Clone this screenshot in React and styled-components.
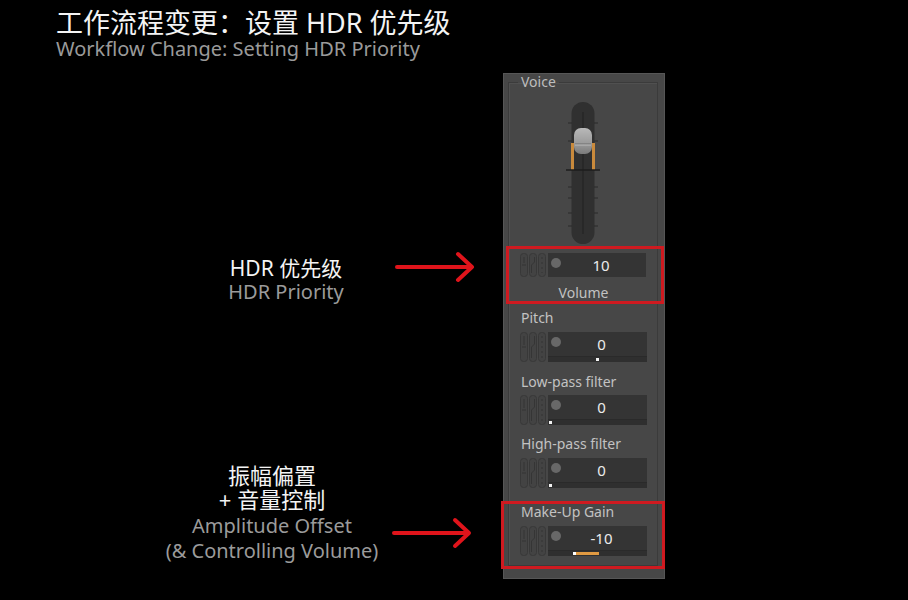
import React from 'react';
import styled, { createGlobalStyle } from 'styled-components';

const GlobalStyle = createGlobalStyle`
  body {
    margin: 0;
    background: #000;
  }
`;

const FONT = `'Noto Sans', 'Noto Sans CJK SC', sans-serif`;

const Page = styled.div`
  width: 908px;
  height: 600px;
  background: #000;
  overflow: hidden;
  font-family: ${FONT};
`;

const Header = styled.header`
  padding: 8px 0 0 56px;
`;

const Title = styled.h1`
  margin: 0;
  font-size: 27px;
  line-height: 30px;
  font-weight: 400;
  color: #f4f4f4;
`;

const Subtitle = styled.div`
  font-size: 20px;
  line-height: 22px;
  color: #9a9a9a;
`;

const Main = styled.main`
  display: flex;
  margin-top: 13px;
`;

const Notes = styled.div`
  flex: 0 0 503px;
  display: flex;
  flex-direction: column;
  padding-top: 183px;
  gap: 159px;
`;

const Note = styled.div`
  display: flex;
  align-items: flex-start;
  justify-content: flex-end;
  padding-right: ${({ $right }) => $right}px;
`;

const NoteText = styled.div`
  width: ${({ $width }) => $width}px;
  text-align: center;
`;

const NoteCn = styled.div`
  font-size: ${({ $size }) => $size || 21}px;
  line-height: 24px;
  color: #f4f4f4;
`;

const NoteEn = styled.div`
  font-size: 20px;
  line-height: ${({ $lh }) => $lh || 24}px;
  color: #9b9b9b;
  margin-top: ${({ $mt }) => $mt || 0}px;
  white-space: nowrap;
`;

const ArrowSvg = styled.svg`
  flex: 0 0 auto;
  margin-top: ${({ $top }) => $top}px;
`;

const Arrow = ({ top }) => (
  <ArrowSvg $top={top} width="80" height="32" viewBox="0 0 80 32">
    <g stroke="#e0141b" strokeWidth="4" strokeLinecap="round" strokeLinejoin="round" fill="none">
      <line x1="2" y1="16" x2="76" y2="16" />
      <polyline points="63,3 77,16 63,29" />
    </g>
  </ArrowSvg>
);

const Panel = styled.section`
  width: 162px;
  box-sizing: border-box;
  background: #474747;
  border: 1px solid #565656;
  padding: 0 6px 12px 4px;
`;

const Group = styled.fieldset`
  margin: 0;
  min-width: 0;
  border: 1px solid #3b3b3b;
  box-shadow: inset 1px 1px 0 #505050;
  padding: 10px 10px 0 10px;
`;

const Legend = styled.legend`
  margin-left: -1px;
  padding: 0 3px;
  font-size: 14px;
  line-height: 16px;
  color: #bdbdbd;
`;

const SliderWrap = styled.div`
  display: flex;
  justify-content: center;
  height: 146px;
`;

const Highlight = styled.div`
  border: 3px solid #cf1a20;
  margin: ${({ $margin }) => $margin};
  padding: ${({ $padding }) => $padding};
`;

const Label = styled.div`
  font-size: 14px;
  line-height: 16px;
  color: #c2c2c2;
  padding-left: 2px;
  margin-top: ${({ $mt }) => $mt || 0}px;
  text-align: ${({ $center }) => ($center ? 'center' : 'left')};
  white-space: nowrap;
`;

const Row = styled.div`
  display: flex;
  align-items: flex-start;
  margin-top: ${({ $mt }) => $mt || 0}px;
`;

const Knobs = styled.svg`
  flex: 0 0 auto;
  margin-right: 1px;
`;

const FieldCol = styled.div`
  width: 100px;
  display: flex;
  flex-direction: column;
`;

const Field = styled.div`
  height: 24px;
  background: #343434;
  display: flex;
  align-items: center;
  padding-left: 3px;
  color: #ececec;
  font-size: 15px;
`;

const Dot = styled.span`
  width: 10px;
  height: 10px;
  border-radius: 50%;
  background: #686868;
  flex: 0 0 auto;
  margin-top: -4px;
`;

const Value = styled.span`
  flex: 1;
  text-align: center;
  padding-right: 5px;
`;

const Track = styled.div`
  height: 6px;
  background: #2f2f2f;
  border-top: 1px solid #2a2a2a;
  box-sizing: border-box;
  display: flex;
  align-items: center;
`;

const Marker = styled.div`
  height: 3px;
  margin-left: ${({ $left }) => $left}px;
  width: ${({ $width }) => $width || 3}px;
  background: ${({ $width }) =>
    $width ? 'linear-gradient(90deg, #fff 0 3px, #e09a42 3px)' : '#f2f2f2'};
`;

const KnobColumn = ({ height }) => (
  <Knobs width="28" height={height} viewBox={`0 0 28 ${height}`}>
    <g fill="#434343" stroke="#383838" strokeWidth="1">
      <rect x="1.5" y="0.5" width="7" height={height - 1} rx="3" />
      <rect x="10.5" y="0.5" width="7" height={height - 1} rx="3" />
      <rect x="19.5" y="0.5" width="7" height={height - 1} rx="3" />
    </g>
    <g stroke="#353535" strokeWidth="1" fill="none">
      <line x1="3" y1={height / 2} x2="7" y2={height / 2} />
      <line x1="5" y1="4" x2="5" y2={height / 2 - 2} />
      <path d={`M12.5 ${height - 4} L12.5 ${height / 2} L15.5 ${height / 2 - 3} L15.5 4`} />
      <line x1="23" y1="4" x2="23" y2={height - 4} strokeDasharray="2 3" />
    </g>
  </Knobs>
);

const Control = ({ value, marker, mt, track = true }) => (
  <Row $mt={mt}>
    <KnobColumn height={track ? 30 : 24} />
    <FieldCol>
      <Field>
        <Dot />
        <Value>{value}</Value>
      </Field>
      {track && (
        <Track>
          <Marker $left={marker.left} $width={marker.width} />
        </Track>
      )}
    </FieldCol>
  </Row>
);

const VolumeSlider = () => (
  <svg width="40" height="146" viewBox="0 0 40 146">
    <defs>
      <linearGradient id="thumb" x1="0" y1="0" x2="0" y2="1">
        <stop offset="0" stopColor="#b9b9b9" />
        <stop offset="0.6" stopColor="#9a9a9a" />
        <stop offset="1" stopColor="#7a7a7a" />
      </linearGradient>
    </defs>
    <rect x="8.5" y="2" width="23" height="142" rx="11.5" fill="#303030" />
    <line x1="20" y1="12" x2="20" y2="134" stroke="#262626" strokeWidth="1.5" />
    <g stroke="#2b2b2b" strokeWidth="1">
      {[23, 41, 87, 98, 113, 126].map((y) => (
        <g key={y}>
          <line x1="5" y1={y} x2="9" y2={y} />
          <line x1="31" y1={y} x2="35" y2={y} />
        </g>
      ))}
    </g>
    <rect x="8" y="43" width="3" height="27" fill="#c98a3c" />
    <rect x="29" y="43" width="3" height="27" fill="#c98a3c" />
    <line x1="3" y1="70" x2="37" y2="70" stroke="#1c1c1c" strokeWidth="1.5" />
    <rect x="11" y="28" width="18" height="26" rx="7" fill="url(#thumb)" />
    <line x1="12" y1="44" x2="28" y2="44" stroke="#6e6e6e" strokeWidth="1" />
    <line x1="12" y1="45" x2="28" y2="45" stroke="#c4c4c4" strokeWidth="0.8" />
  </svg>
);

export default function App() {
  return (
    <Page>
      <GlobalStyle />
      <Header>
        <Title>工作流程变更：设置 HDR 优先级</Title>
        <Subtitle>Workflow Change: Setting HDR Priority</Subtitle>
      </Header>
      <Main>
        <Notes>
          <Note $right={28}>
            <NoteText $width={218}>
              <NoteCn>HDR 优先级</NoteCn>
              <NoteEn>HDR Priority</NoteEn>
            </NoteText>
            <Arrow top={-5} />
          </Note>
          <Note $right={31}>
            <NoteText $width={240}>
              <NoteCn $size={22}>振幅偏置</NoteCn>
              <NoteCn $size={22}>+ 音量控制</NoteCn>
              <NoteEn $lh={25} $mt={2}>Amplitude Offset</NoteEn>
              <NoteEn $lh={25}>(&amp; Controlling Volume)</NoteEn>
            </NoteText>
            <Arrow top={54} />
          </Note>
        </Notes>
        <Panel>
          <Group>
            <Legend>Voice</Legend>
            <SliderWrap>
              <VolumeSlider />
            </SliderWrap>
            <Highlight $margin="0 -17px 0 -13px" $padding="4px 15px 0 10px">
              <Control value="10" track={false} />
              <Label $center $mt={8}>Volume</Label>
            </Highlight>
            <Label $mt={6}>Pitch</Label>
            <Control value="0" mt={6} marker={{ left: 48 }} />
            <Label $mt={12}>Low-pass filter</Label>
            <Control value="0" mt={5} marker={{ left: 1 }} />
            <Label $mt={11}>High-pass filter</Label>
            <Control value="0" mt={6} marker={{ left: 1 }} />
            <Highlight $margin="13px -18px -4px -18px" $padding="0 15px 10px 15px">
              <Label>Make-Up Gain</Label>
              <Control value="-10" mt={6} marker={{ left: 25, width: 26 }} />
            </Highlight>
          </Group>
        </Panel>
      </Main>
    </Page>
  );
}
